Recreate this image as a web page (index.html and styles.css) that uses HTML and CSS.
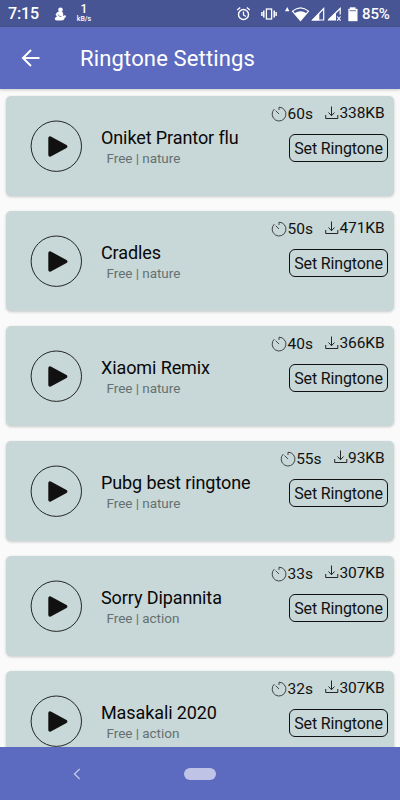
FILE: index.html
```html
<!DOCTYPE html>
<html lang="en">
<head>
<meta charset="utf-8">
<title>Ringtone Settings</title>
<link rel="stylesheet" href="styles.css">
</head>
<body>
<svg class="sprite" aria-hidden="true">
  <symbol id="play" viewBox="0 0 52 52"><circle cx="26.300" cy="26.200" r="25.200" fill="none" stroke="#111" stroke-width=".9"/><path d="M20 18v17L35.700 26.500z" fill="#111" stroke="#111" stroke-width="3.400" stroke-linejoin="round"/></symbol>
  <symbol id="timer" viewBox="0 0 16 16"><path d="M8 4V1.200A6.900 6.900 0 1 1 3.300 3.100M4.600 4.600L8 8" fill="none" stroke="#222" stroke-width=".8"/></symbol>
  <symbol id="download" viewBox="0 0 14 14"><path d="M6.500 .5V9.500M3.500 6.500L6.500 9.700L9.500 6.500M.7 9V12.500H12.800V9" fill="none" stroke="#111" stroke-width=".9"/></symbol>
</svg>
<div class="screen">
  <header class="status">
    <span class="clock">7:15</span>
    <svg class="figure" viewBox="0 0 14 14"><circle cx="7.500" cy="2.700" r="2.300" fill="#fff"/><path d="M5.500 4.500H9.300Q10.500 6.500 10.100 9L12.300 8L13 10L11.500 11Q11.500 13.500 8 13.500H4Q1.500 13.300 1.800 11.500Q2.500 10 4 9.600L2.500 7.500L4 5.500Z" fill="#fff"/><path d="M5 7.500Q6 10 8.500 9.600" fill="none" stroke="#485594" stroke-width=".7"/></svg>
    <span class="speed"><span class="rate">1</span><span class="unit">kB/s</span></span>
    <svg class="system" viewBox="0 0 124 20" fill="none" stroke="#fff">
      <circle cx="7.500" cy="10.500" r="5" stroke-width="1.400"/><path d="M7.500 7.500V11L10 12.500M1.200 6L4.200 3.500M10.800 3.500L13.800 6" stroke-width="1.300"/>
      <rect x="30.400" y="5" width="5.200" height="10" stroke-width="1.300"/><path d="M27.800 6.500V13.500M38.200 6.500V13.500M25.900 8V12M40.100 8V12" stroke-width="1.500"/>
      <path d="M49 7.300L51.200 3L53.400 7.300Z" fill="#fff" stroke="none"/>
      <path d="M56.500 7.200Q64.500 .5 72.500 7.200L64.500 16.700Z" stroke-width="1.100"/><path d="M58.500 9.200Q64.500 5.500 70.500 9.200L64.500 16.700Z" fill="#fff" stroke="none"/>
      <path d="M76.700 16H87.700V4.500Z" stroke-width="1.200"/><path d="M75.500 16.500L83.300 9V16.500Z" fill="#fff" stroke="none"/>
      <path d="M92.300 16L104.200 4.500V10.500" stroke-width="1.200"/><path d="M91.500 16.500L100 8.500V16.500Z" fill="#fff" stroke="none"/><path d="M101.200 12.500L104.600 16.600M104.600 12.500L101.200 16.600" stroke-width="1.100"/>
      <path d="M114 5V3.500H119.300V5H121.300V17H112.500V5Z" fill="#fff" stroke="#fff" stroke-width=".4"/><path d="M113.500 6.700H120" stroke="#485594" stroke-width=".8"/>
    </svg>
    <span class="battery">85%</span>
  </header>
  <nav class="appbar">
    <svg class="back" viewBox="0 0 20 20"><path d="M18.500 10H2.500M10 2L2 10L10 18" fill="none" stroke="#fff" stroke-width="2"/></svg>
    <h1 class="title">Ringtone Settings</h1>
  </nav>
  <main class="list" id="list"></main>
  <footer class="navigation">
    <svg class="nav-back" viewBox="0 0 8 12"><path d="M6.700 1L1.500 6L6.700 11" fill="none" stroke="#bfc4e6" stroke-width="1.400"/></svg>
    <span class="home"></span>
  </footer>
</div>
<script src="script.js"></script>
</body>
</html>
```
FILE: styles.css
```css
* { box-sizing: border-box; }
body { margin: 0; font-family: Roboto, sans-serif; color: #111; }
.sprite { display: none; }
.screen { width: 400px; height: 800px; display: flex; flex-direction: column; overflow: hidden; background: #fafafa; }
.status { height: 27px; flex: none; display: flex; align-items: center; background: #485594; color: #fff; padding: 0 7px 0 8px; }
.clock { font-size: 16px; font-weight: 500; width: 45px; letter-spacing: -.1px; line-height: 26px; padding-top: 1px; }
.figure { width: 14px; height: 14px; }
.speed { display: flex; flex-direction: column; align-items: center; width: 16px; margin-left: 9px; font-weight: 500; }
.rate { font-size: 12px; line-height: 12px; }
.unit { font-size: 7px; line-height: 9px; }
.system { width: 124px; height: 20px; margin-left: auto; margin-top: 1px; }
.battery { width: 31px; font-size: 15px; font-weight: 500; white-space: nowrap; margin-left: 2px; letter-spacing: -.1px; }
.appbar { height: 62px; flex: none; display: flex; align-items: center; background: #5c6bc0; color: #fff; padding-left: 21px; box-shadow: 0 1px 3px rgba(0,0,0,.2); z-index: 1; }
.back { width: 20px; height: 20px; }
.title { margin: 2px 0 0 39px; font-size: 22px; font-weight: 400; line-height: 30px; letter-spacing: .15px; }
.list { flex: 1; min-height: 0; overflow: hidden; display: flex; flex-direction: column; gap: 14.85px; padding: 7.400px 6px 0; }
.card { height: 100px; flex: none; display: flex; justify-content: space-between; background: #c8d7d7; border-radius: 5px; box-shadow: 0 1px 3px rgba(0,0,0,.2); padding: 0 6px 0 24px; }
.play { width: 52px; height: 52px; margin-top: 24px; flex: none; }
.details { flex: 1; margin: 30px 0 0 19px; white-space: nowrap; }
.name { margin: 0; font-size: 18px; font-weight: 400; line-height: 24px; letter-spacing: -.1px; color: #080808; }
.genre { margin: 0 0 0 5.500px; font-size: 13.5px; line-height: 17.600px; letter-spacing: -.04px; color: #657171; }
.actions { display: flex; flex-direction: column; align-items: flex-end; }
.meta { display: flex; height: 20px; margin: 7px 3.500px 0 0; font-size: 15.5px; line-height: 20px; }
.duration { display: flex; margin-right: 12.500px; padding-top: 1px; }
.size { display: flex; letter-spacing: -.1px; }
.timer { width: 16px; height: 16px; margin: 2px .5px 0 0; }
.download { width: 14px; height: 14px; margin-top: 2.500px; }
.set { width: 99px; height: 28px; margin-top: 11px; padding: 1px 0 0; border: 1.200px solid #111; border-radius: 6px; background: none; color: #111; font: 16px/25px Roboto, sans-serif; letter-spacing: -.15px; white-space: nowrap; }
.navigation { height: 53px; flex: none; display: flex; align-items: center; background: #5c6bc0; padding-left: 73px; z-index: 1; }
.nav-back { width: 8px; height: 12px; }
.home { width: 32px; height: 12px; margin-left: 103px; border-radius: 6px; background: #bfc4e6; }
```
FILE: script.js
```js
const ringtones = [
  ["Oniket Prantor flu", "nature", "60s", "338KB"],
  ["Cradles", "nature", "50s", "471KB"],
  ["Xiaomi Remix", "nature", "40s", "366KB"],
  ["Pubg best ringtone", "nature", "55s", "93KB"],
  ["Sorry Dipannita", "action", "33s", "307KB"],
  ["Masakali 2020", "action", "32s", "307KB"]
];
document.getElementById("list").innerHTML = ringtones.map(([name, genre, duration, size]) => `
  <article class="card">
    <svg class="play"><use href="#play"/></svg>
    <div class="details"><h2 class="name">${name}</h2><p class="genre">Free | ${genre}</p></div>
    <div class="actions">
      <div class="meta">
        <span class="duration"><svg class="timer"><use href="#timer"/></svg>${duration}</span>
        <span class="size"><svg class="download"><use href="#download"/></svg>${size}</span>
      </div>
      <button class="set">Set Ringtone</button>
    </div>
  </article>`).join("");
```
